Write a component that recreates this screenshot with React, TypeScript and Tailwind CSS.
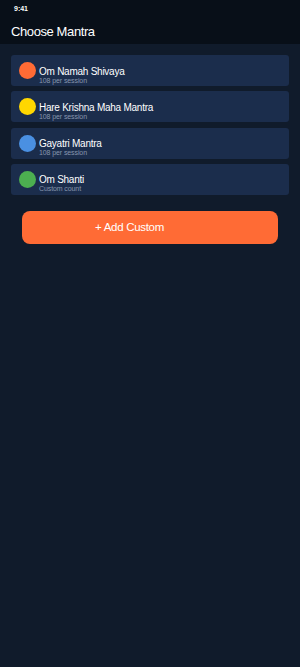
import React from "react";

const items = [
  { name: "Om Namah Shivaya", sub: "108 per session", color: "bg-[#ff6b35]" },
  { name: "Hare Krishna Maha Mantra", sub: "108 per session", color: "bg-[#ffd700]" },
  { name: "Gayatri Mantra", sub: "108 per session", color: "bg-[#4a90e2]" },
  { name: "Om Shanti", sub: "Custom count", color: "bg-[#4caf50]" },
];

export default function App() {
  return (
    <div className="w-[300px] h-[667px] bg-[#101b2b] flex flex-col" style={{ fontFamily: '"Liberation Sans", Arial, sans-serif' }}>
      <div className="bg-[#080f18]">
        <div className="h-[20px] pl-[14px] pt-[5px] text-[7px] font-semibold text-white leading-none">9:41</div>
        <div className="h-[24px] pl-[11px] pt-[1px] text-[13px] text-white leading-[22px] tracking-[-0.4px]">Choose Mantra</div>
      </div>
      <div className="flex flex-col gap-[5.3px] px-[11px] pt-[11px]">
        {items.map((it) => (
          <div key={it.name} className="h-[31px] rounded-[3px] bg-[#1b2d4c] flex items-center pl-[8px] gap-[3px]">
            <div className={`w-[17px] h-[17px] rounded-full ${it.color}`} />
            <div className="flex flex-col self-start pt-[10.5px]">
              <div className="text-[10px] text-white leading-[11px] tracking-[-0.25px]">{it.name}</div>
              <div className="text-[7px] text-[#8796ad] leading-[8px] tracking-[-0.1px]">{it.sub}</div>
            </div>
          </div>
        ))}
      </div>
      <div className="px-[22px] pt-[16px]">
        <button className="w-full h-[33px] rounded-[8px] bg-[#ff6b35] text-white text-[11.5px] text-left pl-[73px] tracking-[-0.3px]">+ Add Custom</button>
      </div>
    </div>
  );
}
